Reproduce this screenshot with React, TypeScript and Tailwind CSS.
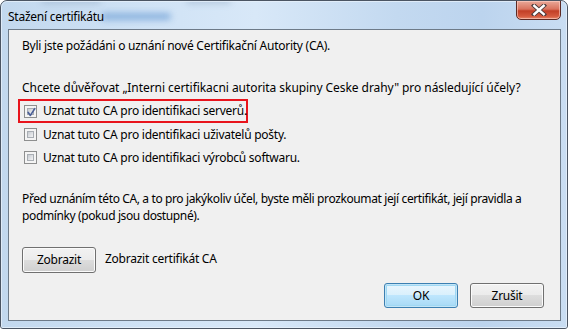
import React from "react";

function CheckBox({ checked }: { checked?: boolean }) {
  return (
    <div className="relative w-[13px] h-[13px] shrink-0 border border-[#8e8f8f] bg-[#f4f4f4]">
      <div className="absolute inset-[2px] border border-[#a9aeb4] bg-[linear-gradient(135deg,#c6cad0_0%,#e2e4e7_60%,#f4f4f4_100%)]" />
      {checked && (
        <svg className="absolute left-[1px] top-[1px]" width="11" height="11" viewBox="0 0 11 11">
          <path d="M2.2 5.4 L4.4 8.4 L8.8 1.6" fill="none" stroke="#4a5f97" strokeWidth="1.7" strokeLinecap="round" strokeLinejoin="round" />
        </svg>
      )}
    </div>
  );
}

function Win7Button({ label, def, className }: { label: string; def?: boolean; className?: string }) {
  return (
    <div
      className={
        "flex items-center justify-center rounded-[3px] border text-[12px] text-black " +
        (def
          ? "border-[#3c7fb1] shadow-[inset_0_0_0_1px_#c4e5f6,inset_0_0_0_2px_#9fd8f4] bg-[linear-gradient(to_bottom,#eaf6fd_0%,#d9f0fc_50%,#bee6fd_50%,#a7d9f5_100%)] "
          : "border-[#707070] shadow-[inset_0_0_0_1px_#fbfbfb] bg-[linear-gradient(to_bottom,#f2f2f2_0%,#ebebeb_50%,#dddddd_50%,#cfcfcf_100%)] ") +
        (className ?? "")
      }
    >
      {label}
    </div>
  );
}

export default function App() {
  return (
    <div className="w-[568px] h-[329px] overflow-hidden bg-white tracking-[-0.25px]" style={{ fontFamily: '"Noto Sans", "Open Sans", sans-serif' }}>
      <div className="relative w-[568px] h-[329px] flex flex-col rounded-t-[7px] rounded-b-[3px] border border-[#4b5563] overflow-hidden bg-[linear-gradient(to_right,#c2d8ee_0%,#cfe2f5_25%,#d8e8f8_45%,#c3d9f0_70%,#bcd4ee_85%,#c9ddf2_100%)]">
        {/* glass streaks */}
        <div className="absolute left-[100px] top-[12px] w-[70px] h-[7px] rounded-full bg-[#6f9fd6] opacity-70 blur-[3px]" />
        <div className="absolute left-[40px] top-[-4px] w-[60px] h-[7px] rounded-full bg-[#8aa2bd] opacity-40 blur-[3px]" />
        <div className="absolute left-[185px] top-[-4px] w-[45px] h-[7px] rounded-full bg-[#8aa2bd] opacity-40 blur-[3px]" />
        <div className="absolute inset-0 rounded-t-[6px] border border-[#e6f0fa] opacity-80 pointer-events-none" />

        {/* title bar */}
        <div className="relative h-[28px] shrink-0 flex items-center pl-[7px] pt-[4px]">
          <span className="text-[12px] text-black">Stažení certifikátu</span>
          <div className="absolute right-[6px] top-[-1px] w-[45px] h-[20px] rounded-b-[5px] border border-[#5c2a24] bg-[linear-gradient(to_bottom,#e9a999_0%,#d9735e_45%,#c23f26_55%,#d55a3e_85%,#e68a6c_100%)] shadow-[inset_0_0_0_1px_rgba(255,210,200,0.6)] flex items-center justify-center">
            <svg width="16" height="12" viewBox="0 0 16 12">
              <path d="M3 1.5 L13 10.5 M13 1.5 L3 10.5" stroke="#4a3a3a" strokeWidth="4.2" strokeLinecap="square" />
              <path d="M3.3 1.8 L12.7 10.2 M12.7 1.8 L3.3 10.2" stroke="#ffffff" strokeWidth="2.4" strokeLinecap="square" />
            </svg>
          </div>
        </div>

        {/* client area */}
        <div className="relative ml-[7px] mr-[6px] h-[292px] shrink-0 border border-[#6d7a88] bg-[#f0f0f0] text-[12px] text-black pl-[13px] pr-[4px] pt-[8px] whitespace-nowrap">
          <div className="h-[16px] leading-[16px]">Byli jste požádáni o uznání nové Certifikační Autority (CA).</div>
          <div className="h-[16px] leading-[16px] mt-[26px] tracking-[-0.06px]">Chcete důvěřovat „Interni certifikacni autorita skupiny Ceske drahy" pro následující účely?</div>

          <div className="mt-[3px] ml-[-4px] w-[230px] h-[24px] border-2 border-[#e8141c] flex items-center pl-[4px]">
            <CheckBox checked />
            <span className="ml-[6px] leading-[16px]">Uznat tuto CA pro identifikaci serverů.</span>
          </div>
          <div className="h-[23px] flex items-center pl-[2px]">
            <CheckBox />
            <span className="ml-[6px] leading-[16px]">Uznat tuto CA pro identifikaci uživatelů pošty.</span>
          </div>
          <div className="h-[23px] flex items-center pl-[2px]">
            <CheckBox />
            <span className="ml-[6px] leading-[16px]">Uznat tuto CA pro identifikaci výrobců softwaru.</span>
          </div>

          <div className="mt-[21px] leading-[17px] tracking-[-0.38px]">
            Před uznáním této CA, a to pro jakýkoliv účel, byste měli prozkoumat její certifikát, její pravidla a
            <br />
            podmínky (pokud jsou dostupné).
          </div>

          <div className="mt-[23px] flex items-center">
            <Win7Button label="Zobrazit" className="w-[74px] h-[26px]" />
            <span className="ml-[9px] mt-[-3px]">Zobrazit certifikát CA</span>
          </div>

          <div className="mt-[10px] flex justify-end gap-[12px] pr-[12px]">
            <Win7Button label="OK" def className="w-[74px] h-[25px]" />
            <Win7Button label="Zrušit" className="w-[74px] h-[25px]" />
          </div>
        </div>
      </div>
    </div>
  );
}
